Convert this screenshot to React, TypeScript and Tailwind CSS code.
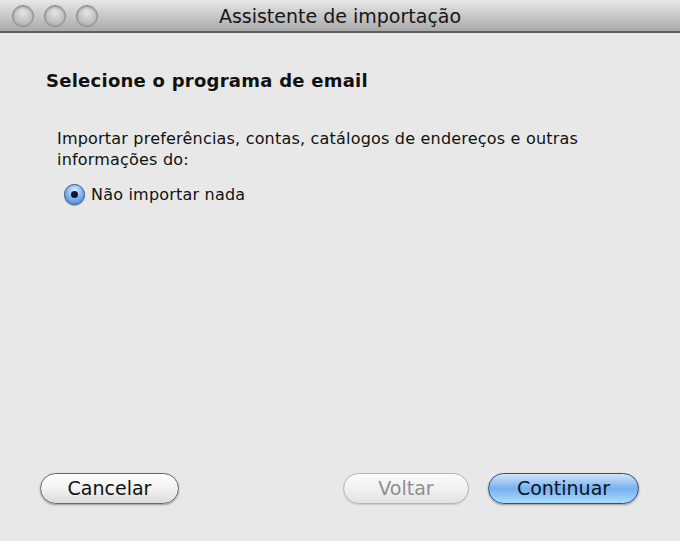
export default function App() {
  const font = { fontFamily: '"DejaVu Sans", "Liberation Sans", sans-serif' }

  return (
    <div className="w-[680px] h-[541px] bg-[#e8e8e8] flex flex-col overflow-hidden" style={font}>
      {/* Title bar */}
      <div className="relative h-[33px] shrink-0 bg-gradient-to-b from-[#e8e8e8] via-[#c8c8c8] to-[#a9a9a9] border-b-2 border-[#5e5e5e] flex items-center justify-center">
        <div className="absolute left-[12px] top-[5px] flex gap-[10px]">
          {[0, 1, 2].map((i) => (
            <div
              key={i}
              className="w-[22px] h-[22px] rounded-full border border-[#8a8a8a] bg-[radial-gradient(circle_at_50%_35%,#e4e4e4_0%,#c2c2c2_55%,#9e9e9e_100%)] shadow-[inset_0_1px_2px_rgba(0,0,0,0.25)]"
            />
          ))}
        </div>
        <span className="text-[19px] text-[#161616] pt-[1px]">Assistente de importação</span>
      </div>

      {/* Content */}
      <div className="flex-1 flex flex-col px-[46px] pt-[36px]">
        <h1 className="text-[18px] font-bold text-[#111] leading-[24px] tracking-[0.25px]">
          Selecione o programa de email
        </h1>

        <div className="pl-[11px] mt-[35px] text-[16px] leading-[21px] tracking-[0.2px] text-[#111] w-[560px]">
          <p>Importar preferências, contas, catálogos de endereços e outras informações do:</p>
          <label className="flex items-center gap-[6px] mt-[14px] ml-[7px]">
            <span className="w-[21px] h-[21px] rounded-full border border-[#34528a] bg-[radial-gradient(circle_at_50%_30%,#d6ecff_0%,#7db3ef_50%,#3d7ed6_100%)] flex items-center justify-center shadow-[0_1px_1px_rgba(0,0,0,0.3)]">
              <span className="w-[7px] h-[7px] rounded-full bg-[#0d1830]" />
            </span>
            <span>Não importar nada</span>
          </label>
        </div>

        <div className="flex-1" />

        {/* Buttons */}
        <div className="flex items-center -ml-[6px] -mr-[5px] mb-[37px] text-[19px]">
          <button className="w-[139px] h-[31px] rounded-full border border-[#6a6a6a] bg-gradient-to-b from-[#ffffff] via-[#f2f2f2] to-[#dcdcdc] text-[#111] shadow-[0_1px_2px_rgba(0,0,0,0.35)]">
            Cancelar
          </button>
          <div className="flex-1" />
          <button className="w-[126px] h-[31px] rounded-full border border-[#b4b4b4] bg-gradient-to-b from-[#fbfbfb] via-[#f1f1f1] to-[#e2e2e2] text-[#8e8e8e] shadow-[0_1px_1px_rgba(0,0,0,0.12)]">
            Voltar
          </button>
          <button className="ml-[19px] w-[151px] h-[31px] rounded-full border border-[#2f4f8a] bg-gradient-to-b from-[#cfe5fb] via-[#79b0ee] to-[#a9dcff] text-[#0b1326] shadow-[0_1px_2px_rgba(0,0,0,0.35)]">
            Continuar
          </button>
        </div>
      </div>
    </div>
  )
}
